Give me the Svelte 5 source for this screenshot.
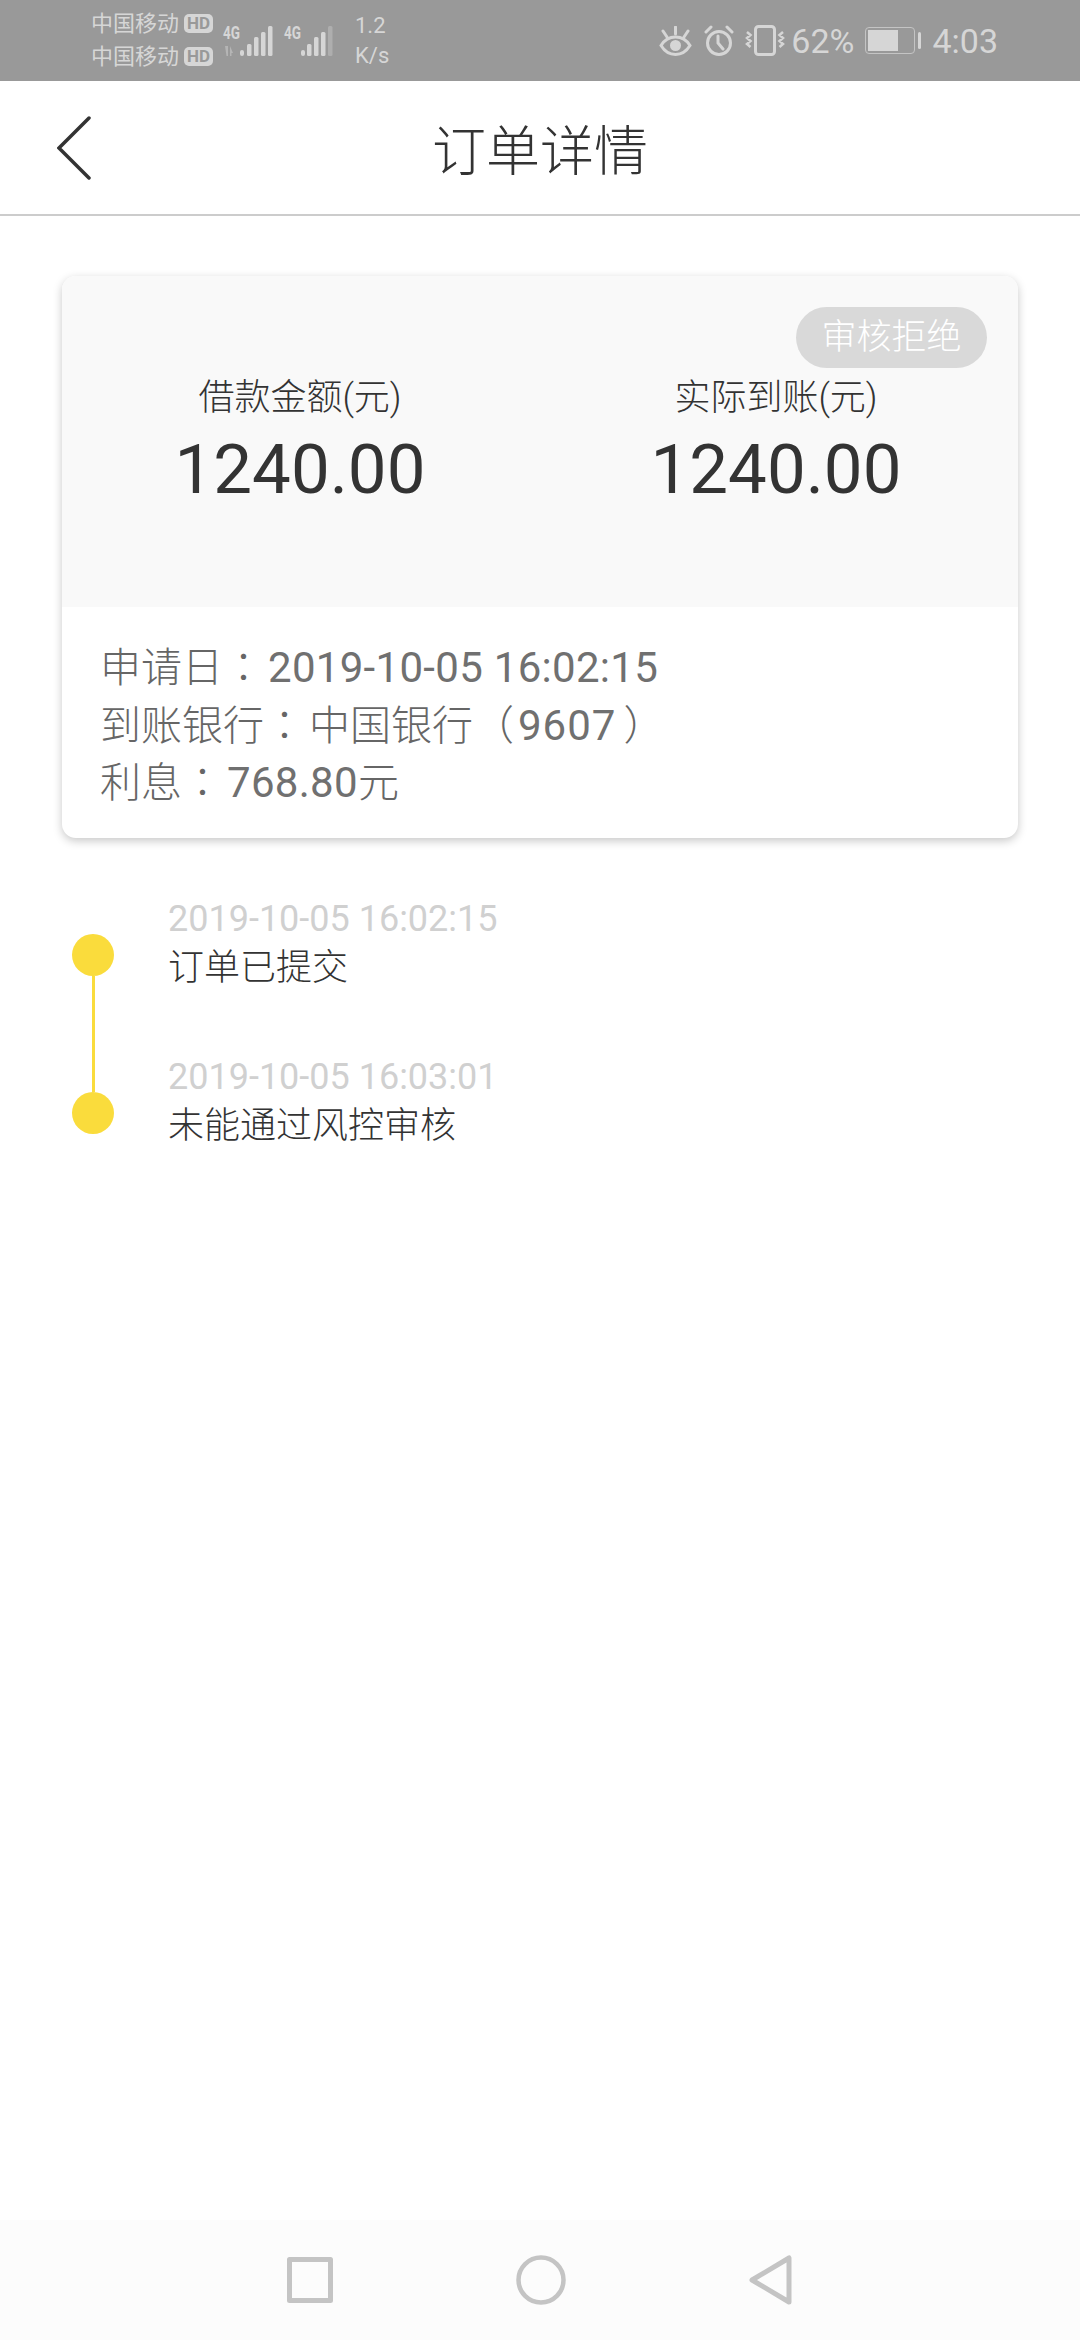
<script>
	const amounts = [
		{ label: '借款金额(元)', value: '1240.00' },
		{ label: '实际到账(元)', value: '1240.00' }
	];
	const events = [
		{ time: '2019-10-05 16:02:15', text: '订单已提交' },
		{ time: '2019-10-05 16:03:01', text: '未能通过风控审核' }
	];
</script>

<div class="page">
	<div class="statusbar">
		<div class="carriers">
			<div class="carrier">中国移动<span class="hd">HD</span></div>
			<div class="carrier">中国移动<span class="hd">HD</span></div>
		</div>
		<svg class="signal" width="90" height="40" viewBox="0 0 90 40" fill="#d6d6d6">
			<text x="3" y="18" class="net" textLength="17" lengthAdjust="spacingAndGlyphs">4G</text>
			<path d="M5 25h3v10h-1.500zM10 25l3 7h-1.500v3h-1.500z" opacity=".45" />
			<rect x="20" y="29" width="4" height="6" rx="2" />
			<rect x="27" y="23" width="4.500" height="12" rx="1.500" />
			<rect x="34" y="16" width="4.500" height="19" rx="1.500" />
			<rect x="41" y="11" width="4.500" height="24" rx="1.500" />
			<rect x="48" y="5" width="4.500" height="30" rx="1.500" />
			<text x="64" y="18" class="net" textLength="17" lengthAdjust="spacingAndGlyphs">4G</text>
			<rect x="81" y="29" width="4" height="6" rx="2" />
		</svg>
		<svg class="signal2" width="36" height="40" viewBox="0 0 36 40" fill="#d6d6d6">
			<rect x="2" y="23" width="4.500" height="12" rx="1.500" />
			<rect x="9" y="16" width="4.500" height="19" rx="1.500" />
			<rect x="16" y="11" width="4.500" height="24" rx="1.500" />
			<rect x="23" y="5" width="4.500" height="30" rx="1.500" opacity=".35" />
		</svg>
		<div class="speed"><span>1.2</span><span>K/s</span></div>
		<div class="spacer"></div>
		<svg class="icon" width="33" height="30" viewBox="0 0 33 30" fill="none" stroke="#d6d6d6" stroke-width="3">
			<path d="M2 19.500C6 13 11 11 16.500 11S27 13 31 19.500C27 26 22 28.500 16.500 28.500S6 26 2 19.500z" />
			<circle cx="16.500" cy="19.500" r="5.500" fill="#d6d6d6" stroke="none" />
			<path d="M16.500 1v7M4 5l4 6M29 5l-4 6" stroke-linecap="round" />
		</svg>
		<svg class="icon alarm" width="30" height="31" viewBox="0 0 30 31" fill="none" stroke="#d6d6d6" stroke-width="3">
			<circle cx="15" cy="18" r="11.500" />
			<path d="M14 11v7l5 6M2 7l5-5M28 7l-5-5" stroke-linecap="round" />
		</svg>
		<svg class="icon vibrate" width="40" height="31" viewBox="0 0 40 31" fill="none" stroke="#d6d6d6" stroke-width="3">
			<rect x="10.500" y="1.500" width="19" height="28" rx="3" />
			<path d="M2 7l3.500 3-3.500 3 3.500 3-3.500 3 3.500 3M38 7l-3.500 3 3.500 3-3.500 3 3.500 3-3.500 3" stroke-width="2.500" />
		</svg>
		<span class="clock pct">62%</span>
		<div class="battery"><div class="level" style="width: 68%"></div></div>
		<div class="tip"></div>
		<span class="clock now">4:03</span>
	</div>

	<header class="topbar">
		<svg class="back" width="34" height="64" viewBox="0 0 34 64" fill="none" stroke="#333" stroke-width="3.500" stroke-linecap="round">
			<path d="M32 2L2 32l30 30" />
		</svg>
		<h1>订单详情</h1>
	</header>

	<main class="content">
		<section class="card">
			<div class="summary">
				<span class="badge">审核拒绝</span>
				<div class="amounts">
					{#each amounts as a}
						<div class="amount">
							<div class="label">{a.label}</div>
							<div class="value">{a.value}</div>
						</div>
					{/each}
				</div>
			</div>
			<div class="info">
				<div>申请日<span class="colon">：</span><span class="num">2019-10-05 16:02:15</span></div>
				<div>到账银行<span class="colon">：</span>中国银行（<span class="num code">9607</span>）</div>
				<div>利息<span class="colon">：</span><span class="num">768.80</span>元</div>
			</div>
		</section>

		<ul class="timeline">
			{#each events as ev, i}
				<li class="event">
					<div class="rail" class:last={i === events.length - 1}>
						{#if i > 0}<div class="line"></div>{/if}
						<div class="dot"></div>
						{#if i < events.length - 1}<div class="line"></div>{/if}
					</div>
					<div class="body">
						<div class="time">{ev.time}</div>
						<div class="text">{ev.text}</div>
					</div>
				</li>
			{/each}
		</ul>
	</main>

	<nav class="navbar">
		<svg width="46" height="46" viewBox="0 0 46 46" fill="none" stroke="#c4c4c4" stroke-width="5" stroke-linejoin="round">
			<rect x="2.500" y="2.500" width="41" height="41" />
		</svg>
		<svg width="50" height="50" viewBox="0 0 50 50" fill="none" stroke="#c4c4c4" stroke-width="4.500">
			<circle cx="25" cy="25" r="22.500" />
		</svg>
		<svg width="44" height="50" viewBox="0 0 44 50" fill="none" stroke="#c4c4c4" stroke-width="5" stroke-linejoin="round">
			<path d="M40 3v44L3 25z" />
		</svg>
	</nav>
</div>

<style>
	:global(body) {
		margin: 0;
		background: #fff;
	}

	.page {
		width: 1080px;
		height: 2340px;
		display: flex;
		flex-direction: column;
		font-family: Roboto, "Noto Sans CJK SC", sans-serif;
		overflow: hidden;
	}

	.statusbar {
		height: 81px;
		flex-shrink: 0;
		display: flex;
		align-items: center;
		padding: 0 82px 0 91px;
		box-sizing: border-box;
		background: #999;
		color: #d6d6d6;
	}

	.carriers {
		width: 122px;
		display: flex;
		flex-direction: column;
		gap: 11px;
		font-size: 22px;
		line-height: 22px;
		margin-top: -1px;
	}

	.carrier {
		display: flex;
		align-items: center;
		white-space: nowrap;
	}

	.hd {
		margin-left: 5px;
		width: 29px;
		height: 19px;
		border-radius: 5px;
		background: #d6d6d6;
		color: #999;
		font-size: 17px;
		line-height: 19px;
		font-weight: 700;
		text-align: center;
	}

	.signal {
		margin-left: 7px;
	}

	.signal2 {
		margin-left: -5px;
	}

	.net {
		font-size: 19px;
		font-weight: 700;
	}

	.speed {
		margin-left: 14px;
		display: flex;
		flex-direction: column;
		align-items: flex-start;
		font-size: 22px;
		line-height: 30px;
	}

	.spacer {
		flex: 1;
	}

	.icon {
		flex-shrink: 0;
	}

	.alarm {
		margin-left: 12px;
	}

	.vibrate {
		margin-left: 11px;
	}

	.clock {
		font-size: 34px;
		line-height: 40px;
	}

	.pct {
		margin-left: 6px;
	}

	.battery {
		margin-left: 11px;
		width: 50px;
		height: 27px;
		box-sizing: border-box;
		border: 1.5px solid #c4c4c4;
		border-radius: 4px;
		padding: 2px;
	}

	.level {
		height: 100%;
		background: #d6d6d6;
	}

	.tip {
		margin-left: 3px;
		width: 3px;
		height: 17px;
		border-radius: 2px;
		background: #d6d6d6;
	}

	.now {
		margin-left: 11px;
	}

	.topbar {
		height: 135px;
		flex-shrink: 0;
		box-sizing: border-box;
		border-bottom: 2px solid #ccc;
		position: relative;
		display: flex;
		align-items: center;
		justify-content: center;
	}

	.back {
		position: absolute;
		left: 57px;
		top: 35px;
	}

	h1 {
		margin: 10px 0 0;
		font-size: 54px;
		font-weight: 300;
		color: #333;
		line-height: 60px;
	}

	.content {
		flex: 1;
		padding: 60px 62px 0;
	}

	.card {
		border-radius: 14px;
		overflow: hidden;
		background: #fff;
		box-shadow: 0 3px 10px rgba(0, 0, 0, 0.22);
		height: 562px;
		display: flex;
		flex-direction: column;
	}

	.summary {
		height: 331px;
		flex-shrink: 0;
		background: #f9f9f9;
		padding: 31px 31px 0 0;
		box-sizing: border-box;
		display: flex;
		flex-direction: column;
	}

	.badge {
		align-self: flex-end;
		width: 191px;
		height: 61px;
		border-radius: 31px;
		background: #d9d9d9;
		color: #fff;
		font-size: 35px;
		line-height: 61px;
		font-weight: 300;
		text-align: center;
	}

	.amounts {
		display: grid;
		grid-template-columns: 476px 476px;
		margin-right: -31px;
		margin-top: 1px;
	}

	.amount {
		text-align: center;
		color: #333;
	}

	.label {
		font-size: 36px;
		line-height: 58px;
		font-weight: 300;
	}

	.value {
		font-size: 69px;
		line-height: 76px;
		margin-top: 5px;
	}

	.info {
		padding: 33px 38px 0;
		font-size: 41px;
		line-height: 57.500px;
		color: #666;
		font-weight: 300;
		white-space: nowrap;
	}

	.info > div {
		height: 57.500px;
	}

	.colon {
		font-family: "Noto Sans CJK TC", sans-serif;
		margin-right: 4px;
		line-height: 1;
	}

	.num {
		font-size: 42px;
		font-weight: 400;
		letter-spacing: 0.300px;
		line-height: 1;
		color: #707070;
	}

	.code {
		margin: 0 7px 0 4px;
		letter-spacing: 1px;
	}

	.timeline {
		list-style: none;
		margin: 0;
		padding: 54px 0 0 10px;
	}

	.event {
		display: flex;
		height: 158px;
	}

	.event:last-child {
		height: auto;
	}

	.rail {
		width: 42px;
		display: flex;
		flex-direction: column;
		align-items: center;
		margin-right: 54px;
	}

	.dot {
		width: 42px;
		height: 42px;
		border-radius: 50%;
		background: #fadc3c;
		flex-shrink: 0;
	}

	.rail:not(.last) .dot {
		margin-top: 42px;
	}

	.line {
		width: 3px;
		flex: 1;
		background: #fadc3c;
	}

	.rail.last .line {
		flex: none;
		height: 42px;
	}

	.time {
		padding-top: 2px;
		font-size: 36px;
		line-height: 50px;
		color: #d0d0d0;
	}

	.text {
		font-size: 36px;
		line-height: 48px;
		color: #333;
		font-weight: 300;
	}

	.navbar {
		height: 120px;
		flex-shrink: 0;
		background: #fcfcfc;
		display: flex;
		align-items: center;
		justify-content: center;
		gap: 183px;
	}
</style>
